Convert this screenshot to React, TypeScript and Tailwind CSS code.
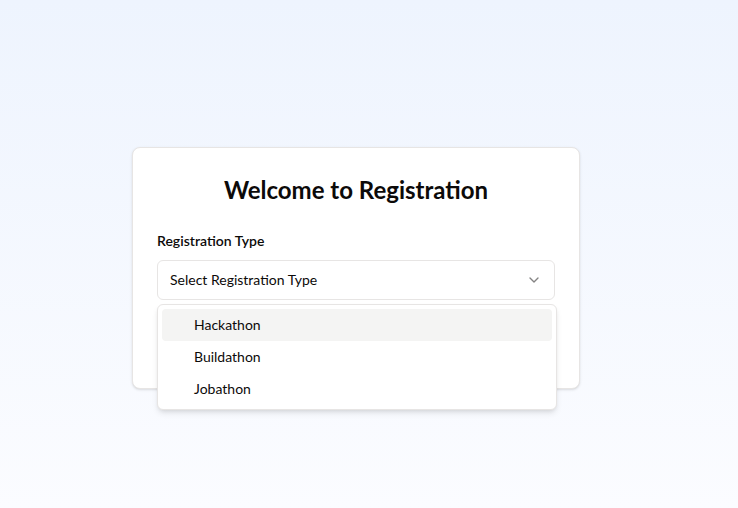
import { ChevronDown } from "lucide-react";

const options = ["Hackathon", "Buildathon", "Jobathon"];

export default function App() {
  return (
    <div
      className="min-h-screen w-full flex items-center justify-center pt-7 pr-[26px] bg-gradient-to-b from-[#eef4fe] to-[#fbfcff] text-[#0c0a09]"
      style={{ fontFamily: '"Segoe UI", Lato, "Noto Sans", sans-serif' }}
    >
      <div className="w-[448px] bg-white border border-[#e7e5e4] rounded-lg shadow-sm px-6 pt-[26px] pb-6">
        <h1 className="text-2xl font-bold text-center mb-[28px]">
          Welcome to Registration
        </h1>

        <div className="relative">
          <label className="block text-sm font-semibold leading-none mb-3">
            Registration Type
          </label>

          <button className="w-full h-10 flex items-center justify-between rounded-md border border-[#e7e5e4] bg-white px-3 text-sm">
            <span>Select Registration Type</span>
            <ChevronDown className="h-4 w-4 opacity-50" />
          </button>

          <div className="absolute left-0 right-[-2px] top-[70px] z-10 rounded-md border border-[#e7e5e4] bg-white p-1 shadow-md">
            {options.map((opt, i) => (
              <div
                key={opt}
                className={
                  "rounded-sm py-1.5 pl-8 pr-2 text-sm " +
                  (i === 0 ? "bg-[#f4f4f3]" : "")
                }
              >
                {opt}
              </div>
            ))}
          </div>
        </div>

        <button className="mt-6 w-full h-10 rounded-md bg-[#1c1917] text-white text-sm font-medium">
          Register
        </button>
      </div>
    </div>
  );
}
